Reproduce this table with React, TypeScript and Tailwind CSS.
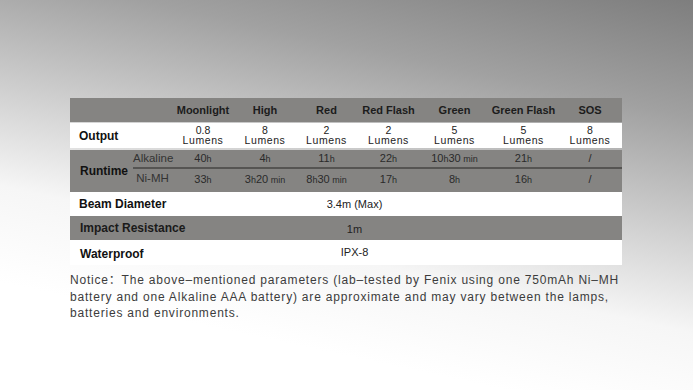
const modes = ['Moonlight', 'High', 'Red', 'Red Flash', 'Green', 'Green Flash', 'SOS']
const lumens = ['0.8', '8', '2', '2', '5', '5', '8']
const widths = ['w-[62px]', 'w-[62px]', 'w-[61px]', 'w-[63px]', 'w-[69px]', 'w-[69px]', 'w-[64px]']

// each runtime is a list of [digits, unit] pieces; units are set smaller
type Piece = [string, string]
const alkaline: Piece[][] = [[['40', 'h']], [['4', 'h']], [['11', 'h']], [['22', 'h']], [['10', 'h'], ['30', ' min']], [['21', 'h']], [['/', '']]]
const nimh: Piece[][] = [[['33', 'h']], [['3', 'h'], ['20', ' min']], [['8', 'h'], ['30', ' min']], [['17', 'h']], [['8', 'h']], [['16', 'h']], [['/', '']]]

// label | sub-label | 7 mode columns
const cols = 'grid grid-cols-[63px_39px_62px_62px_61px_63px_69px_69px_64px]'

function Runtime({ pieces }: { pieces: Piece[] }) {
    return (
        <div className="text-center text-[11px] whitespace-pre text-[#2a2a2a]">
            {pieces.map(([num, unit], i) => (
                <span key={i}>
                    {num}
                    <span className="text-[9px]">{unit}</span>
                </span>
            ))}
        </div>
    )
}

function SubRow({ label, values, border }: { label: string; values: Piece[][]; border?: boolean }) {
    return (
        <div className={`flex items-center ${border ? 'h-[19px] border-b-2 border-[#555452]' : 'flex-1'}`}>
            <div className="w-[39px] text-center text-[11.5px] text-[#333]">{label}</div>
            {values.map((v, i) => (
                <div key={i} className={widths[i]}>
                    <Runtime pieces={v} />
                </div>
            ))}
        </div>
    )
}

export default function App() {
    return (
        <div
            className="w-[693px] h-[390px] overflow-hidden bg-[linear-gradient(192deg,#7e7e7e_0%,#a1a1a1_22%,#d2d2d2_45%,#f6f6f6_62%,#ffffff_80%)]"
            style={{ fontFamily: '"Liberation Sans", Arial, "Noto Sans CJK SC", sans-serif' }}
        >
            <div className="pl-[70px] pt-[98px]">
                <div className="w-[552px] text-[#111]">
                    {/* mode header */}
                    <div className={`${cols} h-[24px] items-center bg-[#858482] text-[11px] font-bold text-[#1c1c1c]`}>
                        <div className="col-span-2" />
                        {modes.map(m => (
                            <div key={m} className="text-center">{m}</div>
                        ))}
                    </div>

                    {/* output */}
                    <div className={`${cols} h-[25px] mt-px items-center bg-white`}>
                        <div className="col-span-2 pl-[9px] text-[12px] font-bold">Output</div>
                        {lumens.map((l, i) => (
                            <div key={i} className="flex flex-col items-center text-[#222]">
                                <span className="text-[10.5px] leading-[9px]">{l}</span>
                                <span className="text-[10.5px] leading-[11px] tracking-[0.6px]">Lumens</span>
                            </div>
                        ))}
                    </div>

                    {/* runtime */}
                    <div className={`${cols} h-[42px] mt-[2px] bg-[#858482]`}>
                        <div className="row-span-2 flex items-center pl-[10px] text-[12px] font-bold">Runtime</div>
                        <div className="col-span-8 flex flex-col">
                            <SubRow label="Alkaline" values={alkaline} border />
                            <SubRow label="Ni-MH" values={nimh} />
                        </div>
                    </div>

                    {/* single-value rows */}
                    <div className="flex h-[24px] items-center bg-white">
                        <div className="w-[63px] shrink-0 pl-[9px] whitespace-nowrap text-[12px] font-bold">Beam Diameter</div>
                        <div className="flex-1 pr-[46px] text-center text-[11px] text-[#222]">3.4m (Max)</div>
                    </div>
                    <div className="flex h-[24px] items-center bg-[#858482]">
                        <div className="w-[63px] shrink-0 pl-[10px] whitespace-nowrap text-[12px] font-bold text-[#1a1a1a]">Impact Resistance</div>
                        <div className="flex-1 pr-[46px] pt-[2px] text-center text-[11px] text-[#222]">1m</div>
                    </div>
                    <div className="flex h-[25px] items-center bg-white">
                        <div className="w-[63px] shrink-0 pl-[10px] pt-[3px] whitespace-nowrap text-[12px] font-bold">Waterproof</div>
                        <div className="flex-1 pr-[46px] text-center text-[11px] text-[#222]">IPX-8</div>
                    </div>
                </div>

                <p className="mt-[7px] w-[575px] text-[12px] leading-[16.5px] tracking-[0.8px] text-[#3c3c3c]">
                    Notice：The above–mentioned parameters (lab–tested by Fenix using one 750mAh Ni–MH battery and one
                    Alkaline AAA battery) are approximate and may vary between the lamps, batteries and environments.
                </p>
            </div>
        </div>
    )
}
